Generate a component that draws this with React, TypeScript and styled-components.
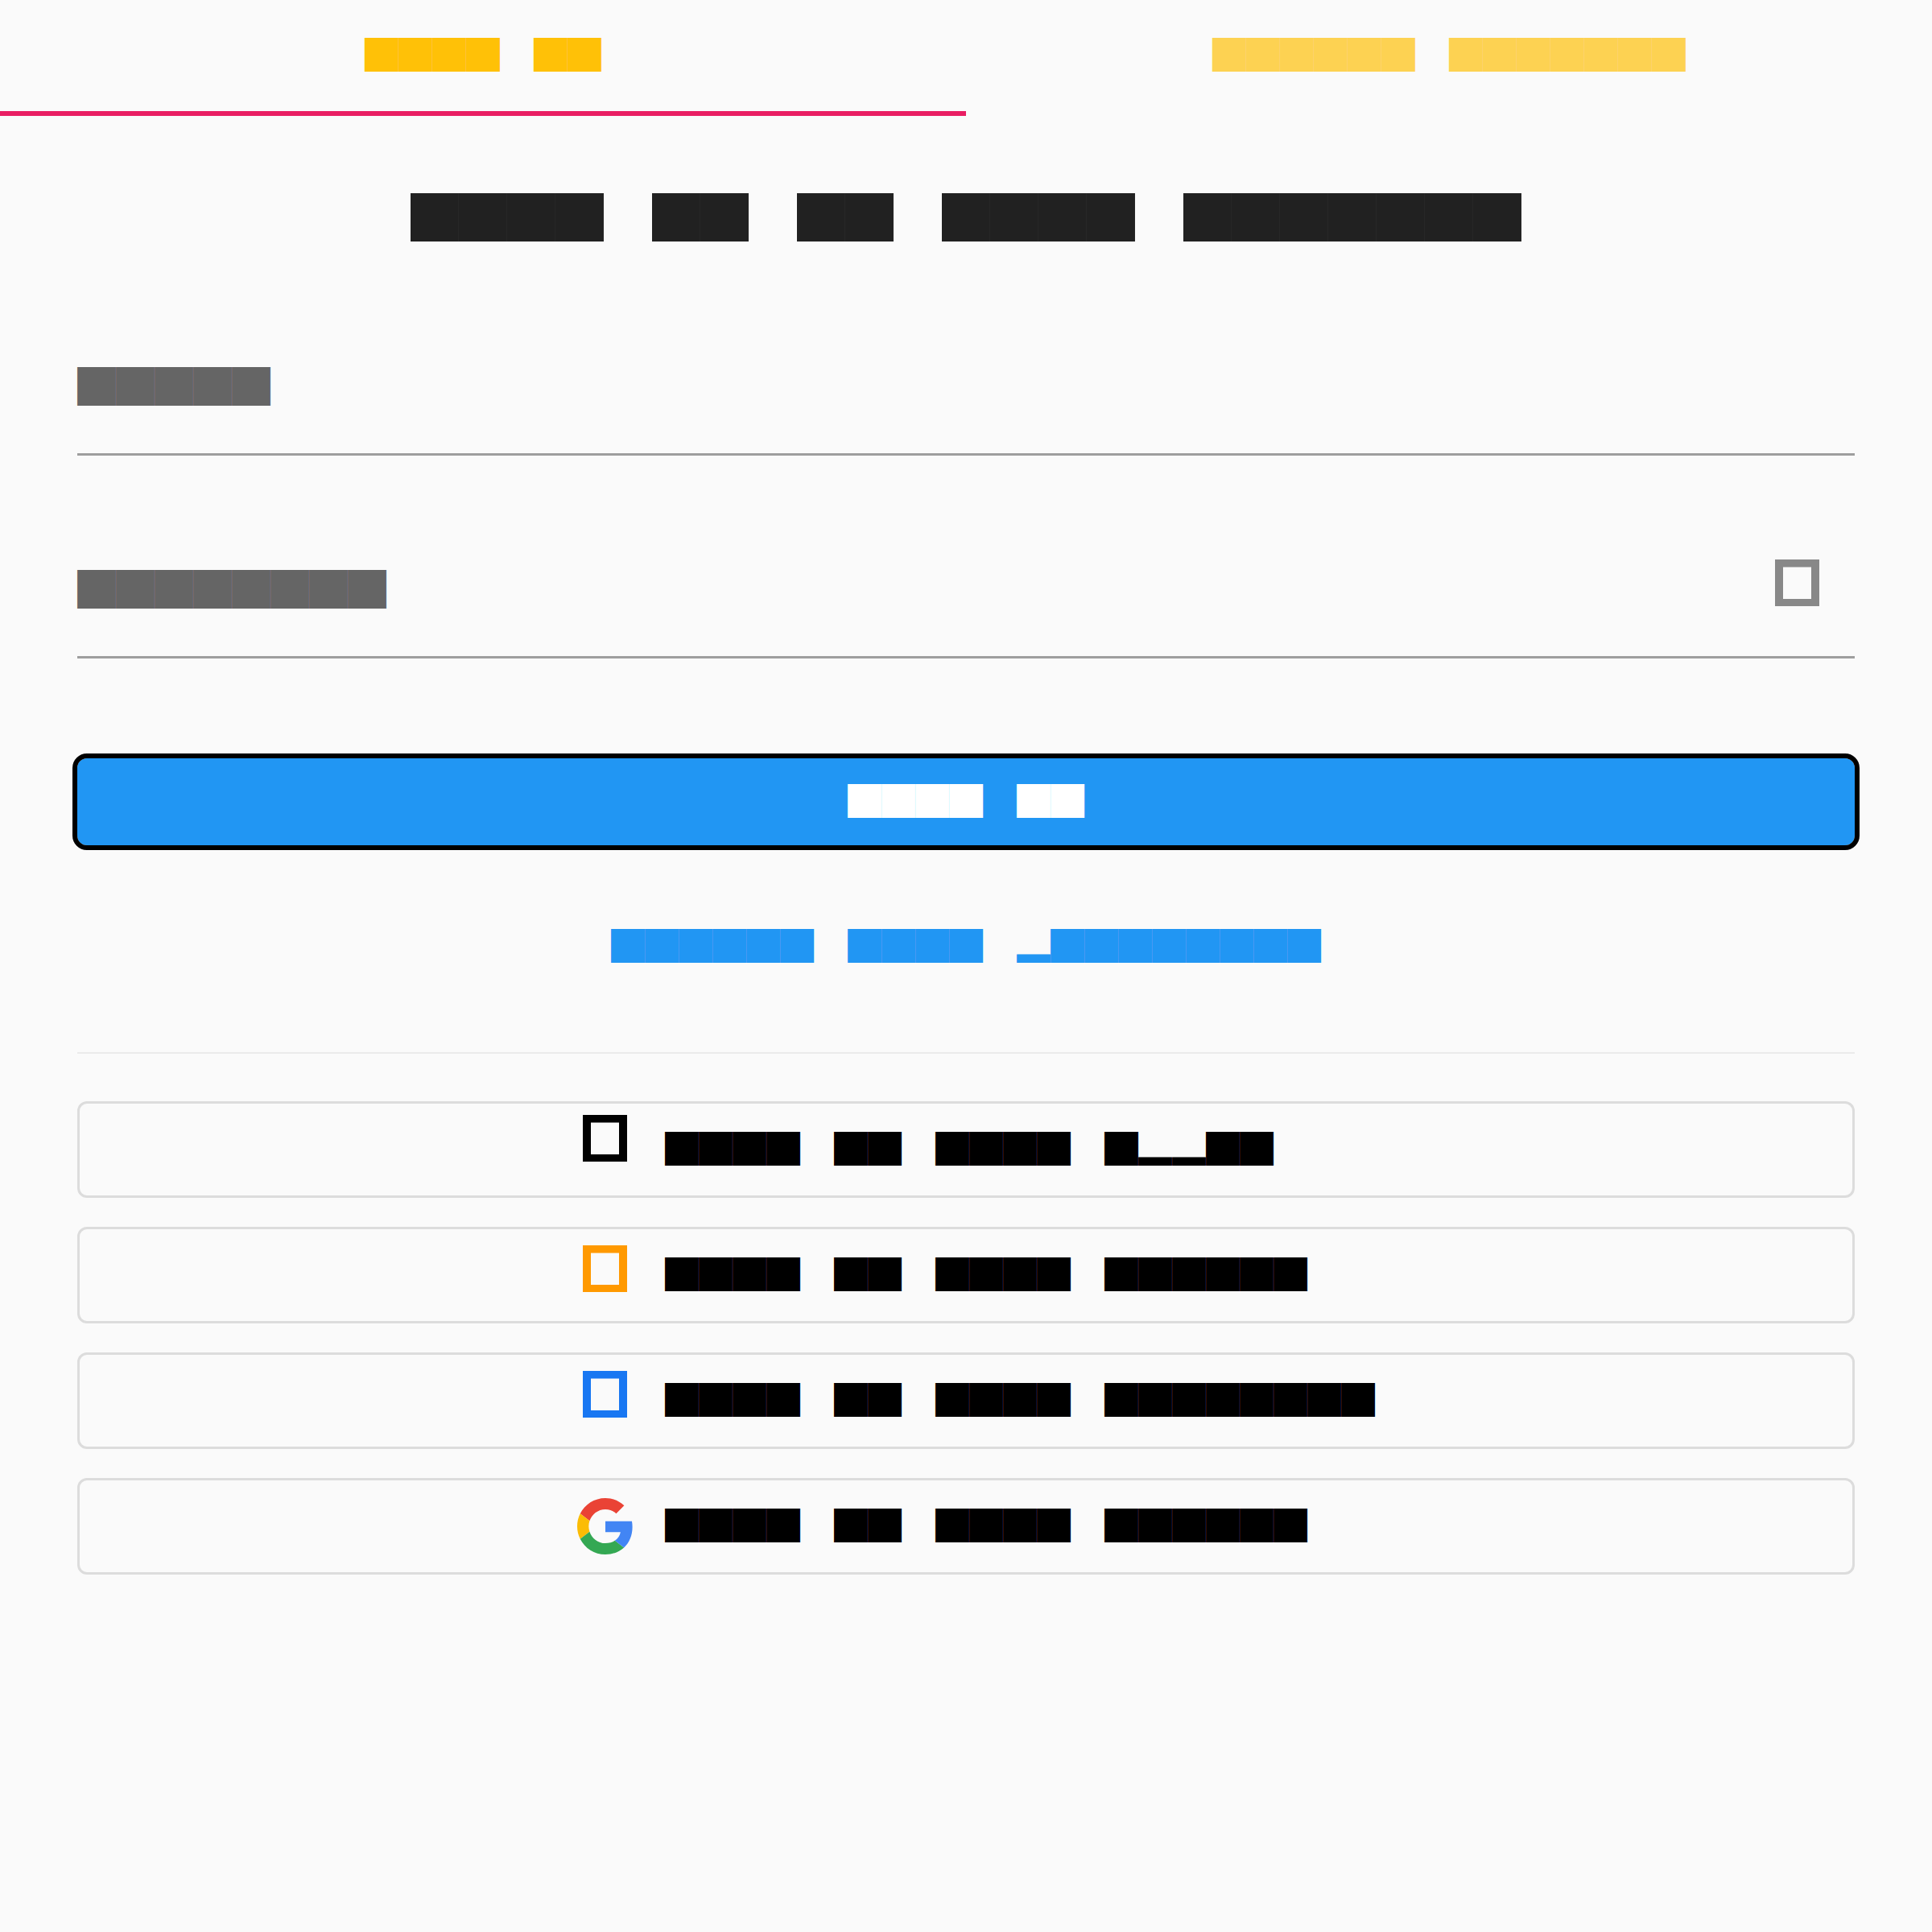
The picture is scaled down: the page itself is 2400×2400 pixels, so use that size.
import React, { useState } from "react";
import styled, { createGlobalStyle } from "styled-components";

const GlobalStyle = createGlobalStyle`
  *, *::before, *::after { box-sizing: border-box; }
  body {
    margin: 0;
    background: #fafafa;
    font-family: "Noto Sans CJK JP", "Noto Sans", sans-serif;
  }
  button, input {
    margin: 0;
    padding: 0;
    border: 0;
    background: none;
    font: inherit;
    color: inherit;
  }
  button { cursor: pointer; }
`;

const Page = styled.div`
  min-height: 100vh;
  background: #fafafa;
`;

const Tabs = styled.div`
  display: grid;
  grid-template-columns: 1fr 1fr;
`;

const Tab = styled.button<{ $active: boolean }>`
  display: flex;
  align-items: center;
  justify-content: center;
  height: 144px;
  border-bottom: 6px solid ${(p) => (p.$active ? "#e91e63" : "transparent")};
  color: ${(p) => (p.$active ? "#ffc107" : "rgba(255, 193, 7, 0.7)")};
`;

const Caption = styled.span`
  padding-bottom: 7px;
  font-size: 42px;
  line-height: 60px;
  white-space: nowrap;
`;

const Form = styled.form`
  display: flex;
  flex-direction: column;
  padding: 87px 96px 96px;
`;

const Title = styled.h1`
  margin: 0 0 119px;
  font-size: 60px;
  font-weight: 400;
  line-height: 72px;
  text-align: center;
  color: rgba(0, 0, 0, 0.87);
`;

const Fields = styled.div`
  display: flex;
  flex-direction: column;
  gap: 108px;
  margin-bottom: 124px;
`;

const Field = styled.div`
  display: grid;
  grid-template-columns: 1fr auto;
  height: 144px;
  border-bottom: 3px solid #9e9e9e;
`;

const FieldLabel = styled.label`
  grid-area: 1 / 1;
  padding-top: 19px;
  font-size: 48px;
  line-height: 72px;
  color: rgba(0, 0, 0, 0.6);
  pointer-events: none;
`;

const FieldInput = styled.input`
  grid-area: 1 / 1;
  width: 100%;
  font-size: 48px;
  outline: none;
`;

const RevealButton = styled.button`
  grid-area: 1 / 2;
  align-self: start;
  display: flex;
  padding: 21px 44px 0 0;
  color: #888888;
`;

const SubmitButton = styled.button`
  display: flex;
  align-items: center;
  justify-content: center;
  height: 108px;
  border-radius: 12px;
  outline: 6px solid #000000;
  background: #2196f3;
  color: #ffffff;
`;

const ForgotButton = styled.button`
  display: flex;
  align-items: center;
  justify-content: center;
  align-self: center;
  height: 108px;
  margin-top: 72px;
  color: #2196f3;
`;

const Divider = styled.hr`
  width: 100%;
  height: 2px;
  margin: 77px 0 59px;
  border: 0;
  background: #ebebeb;
`;

const Providers = styled.div`
  display: flex;
  flex-direction: column;
  gap: 36px;
`;

const ProviderButton = styled.button`
  display: flex;
  align-items: center;
  justify-content: center;
  height: 120px;
  border: 3px solid #dcdcdc;
  border-radius: 12px;
  color: #000000;
`;

const ProviderContent = styled.span`
  display: grid;
  grid-template-columns: 71px 882px;
  column-gap: 39px;
  align-items: center;
  padding-left: 24px;
  text-align: left;
`;

const IconSlot = styled.span<{ $color?: string; $lift: number }>`
  display: flex;
  justify-content: center;
  padding-bottom: ${(p) => p.$lift}px;
  color: ${(p) => p.$color ?? "inherit"};
`;

const BoxIcon = () => (
  <svg width="55" height="58" viewBox="0 0 55 58" fill="none" aria-hidden="true">
    <path d="M0 0H55V58H0ZM10 9.5V49H45V9.5Z" fill="currentColor" fillRule="evenodd" />
  </svg>
);

const GoogleIcon = () => (
  <svg width="70" height="70" viewBox="2 2 44 44" aria-hidden="true">
    <path fill="#EA4335" d="M24 10.75c3.24 0 6.14 1.11 8.43 3.29l6.26-6.26C34.89 4.24 29.93 2 24 2 15.4 2 7.96 6.93 4.34 14.12l7.35 5.7C13.42 14.62 18.27 10.75 24 10.75z" />
    <path fill="#FBBC05" d="M11.69 28.18A13.2 13.2 0 0 1 11 24c0-1.45.25-2.86.69-4.18l-7.35-5.7A21.99 21.99 0 0 0 2 24c0 3.55.85 6.91 2.34 9.88z" />
    <path fill="#34A853" d="M24 46c5.94 0 10.92-1.97 14.56-5.33l-7.11-5.52c-1.97 1.32-4.49 2.1-7.45 2.1-5.73 0-10.58-3.87-12.31-9.07l-7.35 5.7C7.96 41.07 15.4 46 24 46z" />
    <path fill="#4285F4" d="M45.12 24.5c0-1.56-.14-3.06-.4-4.5H24v8.51h11.84c-.51 2.75-2.06 5.08-4.39 6.64l7.11 5.52c4.16-3.83 6.56-9.47 6.56-16.17z" />
  </svg>
);

const tabs = [
  { name: "Sign in", text: "████ ██" },
  { name: "Create account", text: "██████ ███████" },
];

const providers = [
  { name: "Apple", text: "████ ██ ████ █▂▂██", lift: 28, color: "#000000" },
  { name: "Amazon", text: "████ ██ ████ ██████", lift: 16, color: "#ff9900" },
  { name: "Facebook", text: "████ ██ ████ ████████", lift: 16, color: "#1877f2" },
  { name: "Google", text: "████ ██ ████ ██████", lift: 0 },
];

// Words are separated by an ideographic space, which is as wide as one block.
const spaced = (text: string) => text.replace(/ /g, "\u3000");

export default function App() {
  const [active, setActive] = useState(0);
  const [revealed, setRevealed] = useState(false);

  return (
    <Page>
      <GlobalStyle />
      <Tabs role="tablist">
        {tabs.map((tab, i) => (
          <Tab
            key={tab.name}
            type="button"
            role="tab"
            aria-label={tab.name}
            aria-selected={i === active}
            $active={i === active}
            onClick={() => setActive(i)}
          >
            <Caption>{spaced(tab.text)}</Caption>
          </Tab>
        ))}
      </Tabs>

      <Form onSubmit={(e: React.FormEvent) => e.preventDefault()}>
        <Title>{spaced("████ ██ ██ ████ ███████")}</Title>

        <Fields>
          <Field>
            <FieldInput id="email" type="email" />
            <FieldLabel htmlFor="email">█████</FieldLabel>
          </Field>
          <Field>
            <FieldInput id="password" type={revealed ? "text" : "password"} />
            <FieldLabel htmlFor="password">████████</FieldLabel>
            <RevealButton type="button" aria-label="Show password" onClick={() => setRevealed(!revealed)}>
              <BoxIcon />
            </RevealButton>
          </Field>
        </Fields>

        <SubmitButton type="submit" aria-label="Sign in">
          <Caption>{spaced("████ ██")}</Caption>
        </SubmitButton>
        <ForgotButton type="button" aria-label="Forgot your password?">
          <Caption>{spaced("██████ ████ ▂████████")}</Caption>
        </ForgotButton>

        <Divider />

        <Providers>
          {providers.map((p) => (
            <ProviderButton key={p.name} type="button" aria-label={`Sign in with ${p.name}`}>
              <ProviderContent>
                <IconSlot $color={p.color} $lift={p.lift}>
                  {p.name === "Google" ? <GoogleIcon /> : <BoxIcon />}
                </IconSlot>
                <Caption>{spaced(p.text)}</Caption>
              </ProviderContent>
            </ProviderButton>
          ))}
        </Providers>
      </Form>
    </Page>
  );
}
